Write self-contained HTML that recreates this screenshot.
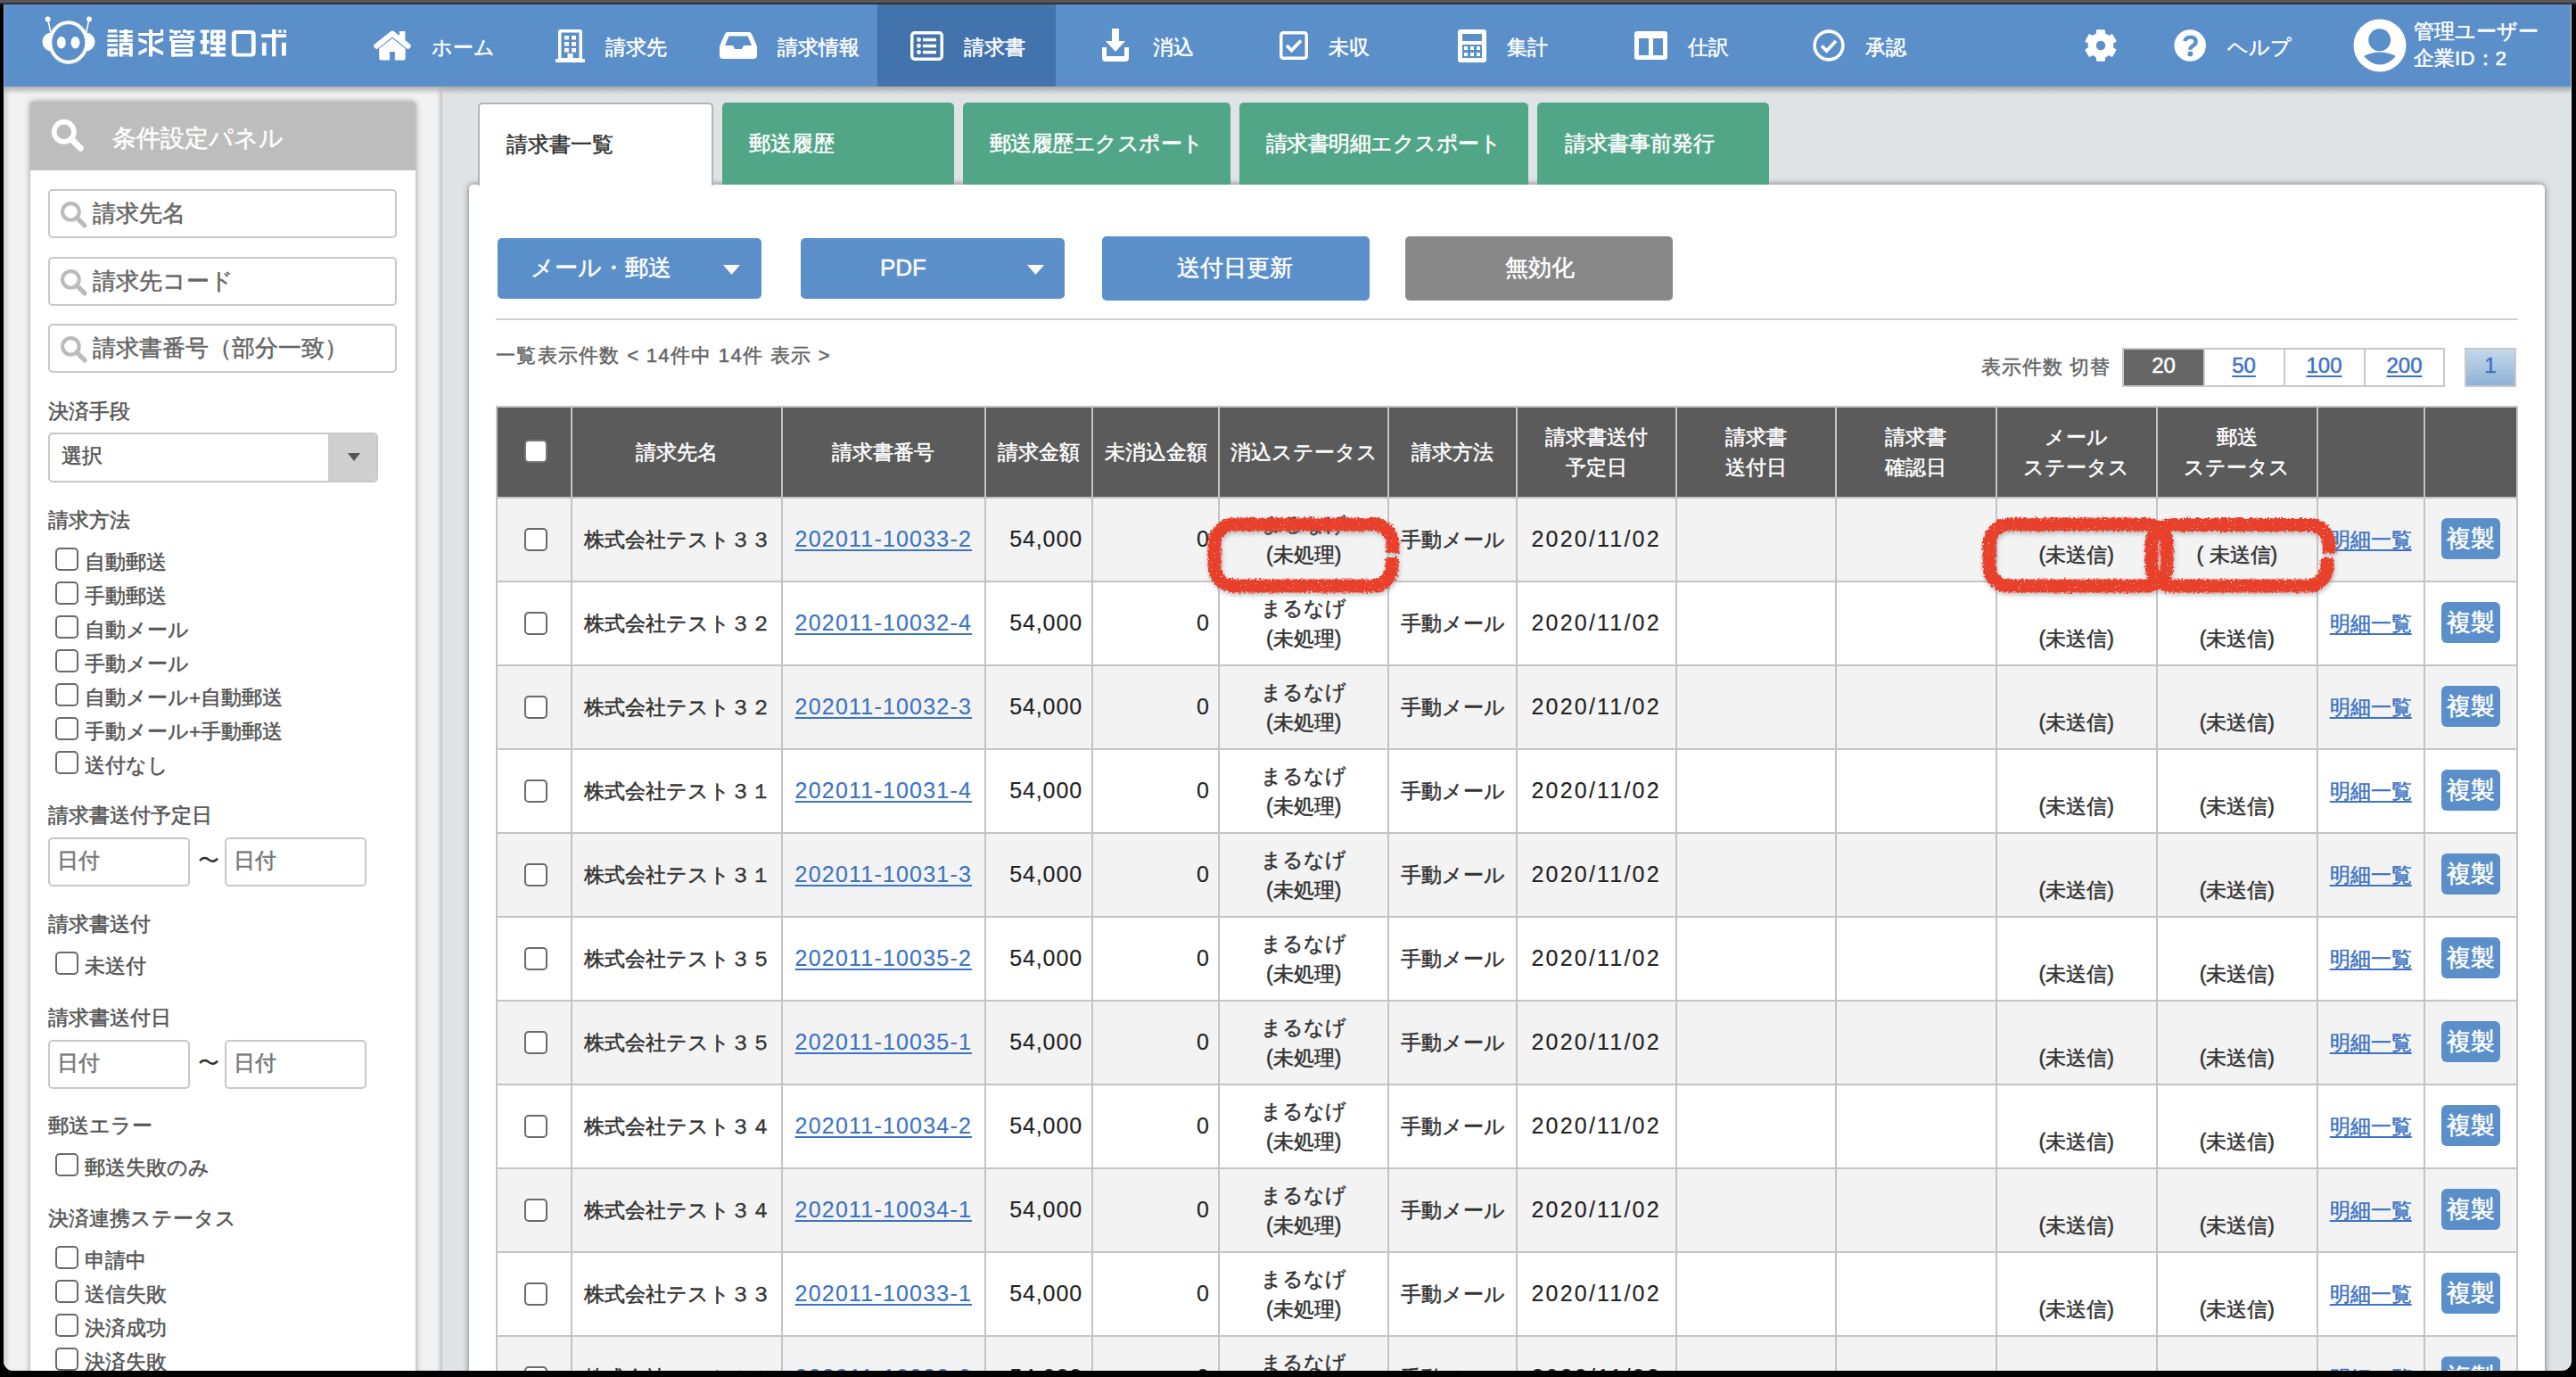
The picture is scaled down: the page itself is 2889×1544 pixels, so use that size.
<!DOCTYPE html>
<html lang="ja"><head><meta charset="utf-8">
<style>
*{box-sizing:border-box;margin:0;padding:0}
html,body{width:2889px;height:1544px;overflow:hidden;background:#000}
body{position:relative;font-family:"Liberation Sans",sans-serif;color:#333;-webkit-text-stroke:0.5px currentColor}
.a{position:absolute;white-space:nowrap}
#topbar{position:absolute;left:0;top:0;width:2889px;height:3px;background:#575757}
#topbar2{position:absolute;left:0;top:3px;width:2889px;height:2px;background:#35302f}
#win{position:absolute;left:0;top:0;width:2889px;height:1544px;clip-path:inset(5px 5px 7px 4px round 0 0 11px 11px);background:#dfe3e6}
#hdr{position:absolute;left:4px;top:5px;width:2880px;height:92px;background:#5b8fc9}
#hdrsh{position:absolute;left:495px;top:97px;width:2389px;height:9px;background:linear-gradient(#a9a9a9,rgba(223,227,230,0))}
#act{position:absolute;left:984px;top:5px;width:200px;height:92px;background:#4273ac}
.nt{color:#fff;font-size:23px;line-height:23px;margin-top:1.5px}
#side{position:absolute;left:4px;top:97px;width:492px;height:1440px;background:#f2f2f2;box-shadow:inset 5px 0 5px -2px rgba(0,0,0,.16),inset -5px 0 5px -3px rgba(0,0,0,.25)}
#sidesh{position:absolute;left:4px;top:97px;width:491px;height:9px;background:linear-gradient(#b0b0b0,rgba(242,242,242,0))}
#panel{position:absolute;left:34px;top:114px;width:432px;height:1500px;background:#fff;border-radius:3px 3px 0 0;box-shadow:0 0 7px rgba(0,0,0,.38)}
#phead{position:absolute;left:34px;top:114px;width:432px;height:77px;background:#bdbdbd;border-radius:3px 3px 0 0}
.lbl{color:#555;font-size:23px;line-height:23px}
.inp{position:absolute;border:2px solid #c8c8c8;border-radius:5px;background:#fff}
.ph{color:#666;font-size:26px;line-height:26px}
.cb{position:absolute;width:26px;height:26px;border:2.5px solid #6a6a6a;border-radius:5px;background:#fff}
.cbl{color:#555;font-size:22.6px;line-height:22px}

.tab{position:absolute;top:115px;height:92px;background:#52a688;border-radius:5px 5px 0 0}
.tt{color:#fff;font-size:24px;line-height:24px}
#cpanel{position:absolute;left:526px;top:207px;width:2328px;height:1400px;background:#fff;border-radius:5px;box-shadow:0 0 7px rgba(0,0,0,.5)}
.btn{position:absolute;background:#5b8fca;border-radius:5px}
.bt{color:#fff;font-size:26px;line-height:26px}
.caret{position:absolute}

.ht{color:#fff;font-size:23px;line-height:34px;text-align:center}
.td{color:#333;font-size:23px;line-height:23px}
.num{font-size:25px;line-height:25px;color:#222;-webkit-text-stroke:0.15px currentColor}
.lnk{color:#3d73c4;text-decoration:underline;text-decoration-thickness:2px;text-underline-offset:3px}
.cp{position:absolute;width:66px;height:46px;background:#5b8fca;border-radius:6px;color:#fff;font-size:27px;line-height:46px;text-align:center}
</style></head><body>
<div id="topbar"></div><div id="topbar2"></div>
<div id="win">
<div id="hdr"></div>
<div id="act"></div>
<div id="hdrsh"></div>
<!-- logo -->
<svg class="a" style="left:44px;top:15px" width="66" height="60" viewBox="44 15 66 60">
 <g fill="#fff">
  <circle cx="53.6" cy="21.4" r="3"/><circle cx="100" cy="21.4" r="3"/>
 </g>
 <g stroke="#fff" stroke-width="1.6" fill="none">
  <line x1="53.8" y1="22" x2="57" y2="37"/><line x1="99.8" y1="22" x2="96.6" y2="37"/>
 </g>
 <path fill="#fff" d="M58,36.5 A10.5,10.5 0 0 0 58,57.5 Z M96,36.5 A10.5,10.5 0 0 1 96,57.5 Z"/>
 <ellipse cx="76.8" cy="47.5" rx="20.5" ry="22.2" fill="none" stroke="#fff" stroke-width="4"/>
 <ellipse cx="68.8" cy="47.8" rx="5" ry="6.8" fill="#fff"/>
 <ellipse cx="84.5" cy="47.8" rx="5" ry="6.8" fill="#fff"/>
</svg>
<svg class="a" id="logot" style="left:115px;top:28px" width="215" height="40" viewBox="115 28 215 40"><path fill="#fff" d="M121.0,33.1H131.3V36.4H121.0ZM120.4,38.7H131.9V41.8H120.4ZM120.4,44.0H131.9V47.0H120.4ZM120.4,49.2H131.9V52.1H120.4ZM133.8,34.1H148.8V36.9H133.8ZM138.9,32.9H143.1V47.4H138.9ZM133.8,39.0H148.8V42.0H133.8ZM133.8,43.7H148.8V46.7H133.8ZM155.0,36.9H183.1V40.1H155.0ZM167.0,33.0H171.0V63.6H167.0ZM180.0,33.0H183.1V37.1H180.0ZM155.4,42.1 L164.7,46.0 L164.7,50.1 L155.4,46.3ZM183.1,42.1 L173.7,46.0 L173.7,50.1 L183.1,46.1ZM164.7,53.2 L155.4,58.0 L155.4,62.1 L164.7,57.4ZM171.0,51.7 L183.1,58.0 L183.1,62.1 L171.0,56.5ZM190.3,33.0H193.6V34.6H190.3ZM190.3,34.3H202.9V36.7H190.3ZM194.9,36.6H198.9V39.1H194.9ZM205.3,33.0H208.5V34.6H205.3ZM204.8,34.3H218.0V36.7H204.8ZM209.7,36.6H213.7V39.1H209.7ZM202.0,38.2H205.9V40.0H202.0ZM190.2,39.9H218.0V43.0H190.2ZM190.2,42.9H193.8V46.0H190.2ZM214.2,42.9H218.0V46.0H214.2ZM192.1,44.9H196.1V63.6H192.1ZM224.7,33.4H234.6V36.8H224.7ZM227.4,33.4H231.9V60.7H227.4ZM224.7,45.1H234.6V49.0H224.7ZM224.7,57.2H234.6V60.7H224.7ZM242.3,50.3H246.4V59.9H242.3ZM236.1,53.0H252.9V56.5H236.1ZM236.1,59.8H252.9V63.6H236.1ZM293.1,38.2H321.0V42.1H293.1ZM305.0,33.0H309.4V63.3H305.0ZM293.9,47.7H298.6V62.6H293.9ZM316.0,47.7H320.8V62.6H316.0ZM312.2,33.5H315.7V36.8H312.2ZM317.8,33.5H321.0V36.8H317.8Z"/><path fill="#fff" fill-rule="evenodd" d="M121.8,54.3H130.4Q131.9,54.3 131.9,55.8V62.1Q131.9,63.6 130.4,63.6H121.8Q120.3,63.6 120.3,62.1V55.8Q120.3,54.3 121.8,54.3ZM123.8,57.4H128.2V60.2H123.8Z"/><path fill="#fff" fill-rule="evenodd" d="M135.0,48.1H147.6Q148.8,48.1 148.8,49.3V62.4Q148.8,63.6 147.6,63.6H135.0Q133.8,63.6 133.8,62.4V49.3Q133.8,48.1 135.0,48.1ZM137.6,50.9H144.9V53.5H137.6ZM137.6,56.2H144.9V58.5H137.6Z"/><path fill="#fff" fill-rule="evenodd" d="M192.1,44.9H215.9V52.9H192.1ZM196.1,48.0H212.7V49.9H196.1Z"/><path fill="#fff" fill-rule="evenodd" d="M193.3,55.0H214.7Q215.9,55.0 215.9,56.2V62.4Q215.9,63.6 214.7,63.6H193.3Q192.1,63.6 192.1,62.4V56.2Q192.1,55.0 193.3,55.0ZM196.1,58.1H212.7V60.1H196.1Z"/><path fill="#fff" fill-rule="evenodd" d="M237.3,33.5H251.7Q252.9,33.5 252.9,34.7V49.2Q252.9,50.4 251.7,50.4H237.3Q236.1,50.4 236.1,49.2V34.7Q236.1,33.5 237.3,33.5ZM239.6,36.8H242.6V39.8H239.6ZM246.4,36.8H249.7V39.8H246.4ZM239.6,43.6H242.6V46.6H239.6ZM246.4,43.6H249.7V46.6H246.4Z"/><path fill="#fff" fill-rule="evenodd" d="M264.9,33.9H281.7Q286.7,33.9 286.7,38.9V58.6Q286.7,63.6 281.7,63.6H264.9Q259.9,63.6 259.9,58.6V38.9Q259.9,33.9 264.9,33.9ZM265.8,38.0H280.9Q281.9,38.0 281.9,39.0V58.8Q281.9,59.8 280.9,59.8H265.8Q264.8,59.8 264.8,58.8V39.0Q264.8,38.0 265.8,38.0Z"/><path fill="#5b8fc9" d="M137.6,61.3H144.9V63.8H137.6Z"/></svg>
<!-- nav icons -->
<svg class="a" style="left:419px;top:34px" width="42" height="34" viewBox="0 0 42 34"><rect x="29" y="1" width="6.4" height="12" rx="0.8" fill="#fff"/><polyline points="3.4,17.6 21,3.6 38.6,17.6" fill="none" stroke="#fff" stroke-width="6.2" stroke-linecap="round" stroke-linejoin="round"/><path fill="#fff" d="M21,8.9 L35.6,20.6 V31.5 Q35.6,33.5 33.6,33.5 H23.9 V23.9 H18.1 V33.5 H8.2 Q6.2,33.5 6.2,31.5 V20.6 Z"/></svg>
<div class="a nt" style="left:484px;top:40px">ホーム</div>
<svg class="a" style="left:623px;top:33px" width="33" height="37" viewBox="0 0 33 37">
 <rect x="0" y="33" width="33" height="4" rx="1" fill="#fff"/>
 <rect x="4.75" y="1.75" width="23.5" height="32" rx="1" fill="none" stroke="#fff" stroke-width="3.5"/>
 <g fill="#fff"><rect x="10" y="7" width="5" height="4.5"/><rect x="18" y="7" width="5" height="4.5"/><rect x="10" y="14" width="5" height="4.5"/><rect x="18" y="14" width="5" height="4.5"/><rect x="10" y="21" width="5" height="4.5"/><rect x="18" y="21" width="5" height="4.5"/><rect x="13.5" y="27" width="6" height="7"/></g>
</svg>
<div class="a nt" style="left:679px;top:40px">請求先</div>
<svg class="a" style="left:807px;top:36px" width="42" height="30" viewBox="0 0 42 30">
 <path fill="#fff" d="M9,0 H33 Q35,0 36,2 L42,16 V26 Q42,30 38,30 H4 Q0,30 0,26 V16 L6,2 Q7,0 9,0 Z"/>
 <path fill="#5b8fc9" d="M10.5,4.5 H31.5 L36,15 H27 L25,19 H17 L15,15 H6 Z"/>
</svg>
<div class="a nt" style="left:872px;top:40px">請求情報</div>
<svg class="a" style="left:1021px;top:35px" width="37" height="33" viewBox="0 0 37 33">
 <rect x="1.75" y="1.75" width="33.5" height="29.5" rx="3" fill="none" stroke="#fff" stroke-width="3.5"/>
 <g fill="#fff"><circle cx="9.5" cy="9.5" r="2.4"/><circle cx="9.5" cy="16.5" r="2.4"/><circle cx="9.5" cy="23.5" r="2.4"/>
 <rect x="14" y="7.8" width="15" height="3.5"/><rect x="14" y="14.8" width="15" height="3.5"/><rect x="14" y="21.8" width="15" height="3.5"/></g>
</svg>
<div class="a nt" style="left:1081px;top:40px">請求書</div>
<svg class="a" style="left:1236px;top:32px" width="30" height="37" viewBox="0 0 30 37">
 <path fill="#fff" d="M11,0 H19 V14 H26 L15,26 L4,14 H11 Z"/>
 <path fill="#fff" d="M0,21 H5 V31 H25 V21 H30 V33 Q30,37 26,37 H4 Q0,37 0,33 Z"/>
</svg>
<div class="a nt" style="left:1293px;top:40px">消込</div>
<svg class="a" style="left:1435px;top:35px" width="32" height="32" viewBox="0 0 32 32">
 <rect x="1.75" y="1.75" width="28.5" height="28.5" rx="2.5" fill="none" stroke="#fff" stroke-width="3.5"/>
 <polyline points="8,16 13.5,21.5 24,10.5" fill="none" stroke="#fff" stroke-width="3.8"/>
</svg>
<div class="a nt" style="left:1490px;top:40px">未収</div>
<svg class="a" style="left:1635px;top:33px" width="32" height="37" viewBox="0 0 32 37">
 <rect x="0" y="0" width="32" height="37" rx="3" fill="#fff"/>
 <rect x="5" y="5" width="22" height="8" fill="#5b8fc9"/>
 <rect x="5" y="17" width="22" height="15" fill="#5b8fc9"/>
 <g fill="#fff"><rect x="7" y="19" width="4" height="4"/><rect x="14" y="19" width="4" height="4"/><rect x="21" y="19" width="4" height="4"/><rect x="7" y="26" width="4" height="4"/><rect x="14" y="26" width="4" height="4"/><rect x="21" y="26" width="4" height="4"/></g>
</svg>
<div class="a nt" style="left:1690px;top:40px">集計</div>
<svg class="a" style="left:1833px;top:35px" width="37" height="32" viewBox="0 0 37 32">
 <rect x="0" y="0" width="37" height="32" rx="3" fill="#fff"/>
 <rect x="5" y="8" width="11" height="19" fill="#5b8fc9"/><rect x="21" y="8" width="11" height="19" fill="#5b8fc9"/>
</svg>
<div class="a nt" style="left:1893px;top:40px">仕訳</div>
<svg class="a" style="left:2033px;top:33px" width="36" height="36" viewBox="0 0 36 36">
 <circle cx="18" cy="18" r="15.9" fill="none" stroke="#fff" stroke-width="3.6"/>
 <polyline points="10,18.5 15.5,24 26,13" fill="none" stroke="#fff" stroke-width="3.8"/>
</svg>
<div class="a nt" style="left:2092px;top:40px">承認</div>
<svg class="a" style="left:2337px;top:32px" width="38" height="38" viewBox="0 0 38 38"><g fill="#fff" transform="translate(19,19)"><circle r="14.3"/><rect x="-5" y="-17.8" width="10" height="8" rx="1.2" transform="rotate(0)"/><rect x="-5" y="-17.8" width="10" height="8" rx="1.2" transform="rotate(60)"/><rect x="-5" y="-17.8" width="10" height="8" rx="1.2" transform="rotate(120)"/><rect x="-5" y="-17.8" width="10" height="8" rx="1.2" transform="rotate(180)"/><rect x="-5" y="-17.8" width="10" height="8" rx="1.2" transform="rotate(240)"/><rect x="-5" y="-17.8" width="10" height="8" rx="1.2" transform="rotate(300)"/></g><circle cx="19" cy="19" r="5.2" fill="#5b8fc9"/></svg>
<svg class="a" style="left:2438px;top:33px" width="36" height="36" viewBox="0 0 36 36"><circle cx="18.2" cy="18" r="17.8" fill="#fff"/><path d="M12.2,13.2 Q13.5,8.6 18.6,8.6 Q24.6,8.6 24.6,13.6 Q24.6,16.6 21,18.6 Q18.4,20 18.4,22.8" fill="none" stroke="#5b8fc9" stroke-width="4.4"/><circle cx="18.4" cy="27.4" r="2.9" fill="#5b8fc9"/></svg>
<div class="a nt" style="left:2498px;top:40px">ヘルプ</div>
<svg class="a" style="left:2639px;top:21px" width="60" height="60" viewBox="0 0 60 60">
 <circle cx="30" cy="30" r="29.5" fill="#fff"/>
 <circle cx="29.7" cy="23.8" r="12.5" fill="#5b8fc9"/>
 <path d="M12,42 Q20,37.5 30,37.5 Q40,37.5 48,42 Q40,51.5 30,51.5 Q20,51.5 12,42Z" fill="#5b8fc9"/>
</svg>
<div class="a" style="left:2707px;top:20.5px;color:#fff;font-size:22.6px;line-height:30.5px">管理ユーザー<br>企業ID：2</div>
<div id="side"></div>
<div id="sidesh"></div>
<div id="panel"></div>
<div id="phead"></div>
<!-- main -->
<div id="cpanel"></div>
<div class="a" style="left:536px;top:115px;width:264px;height:93px;background:#fff;border:2px solid #b5b5b5;border-bottom:none;border-radius:5px 5px 0 0"></div>
<div class="a" style="left:538px;top:204px;width:260px;height:6px;background:#fff"></div>
<div class="a" style="left:568px;top:150px;color:#333;font-size:24px;line-height:24px">請求書一覧</div>
<div class="tab" style="left:810px;width:260px"></div>
<div class="a tt" style="left:840px;top:149px">郵送履歴</div>
<div class="tab" style="left:1080px;width:300px"></div>
<div class="a tt" style="left:1110px;top:149px;letter-spacing:-0.55px">郵送履歴エクスポート</div>
<div class="tab" style="left:1390px;width:324px"></div>
<div class="a tt" style="left:1420px;top:149px;letter-spacing:-0.55px">請求書明細エクスポート</div>
<div class="tab" style="left:1724px;width:260px"></div>
<div class="a tt" style="left:1755px;top:149px">請求書事前発行</div>
<div class="btn" style="left:557.5px;top:267px;width:296.5px;height:68px;background:#5b8fca"></div>
<div class="a bt" style="left:595px;top:287.0px">メール・郵送</div>
<svg class="a" style="left:811px;top:297px" width="19" height="11" viewBox="0 0 19 11"><path d="M0,0 H19 L9.5,11 Z" fill="#fff"/></svg>
<div class="btn" style="left:898px;top:267px;width:296px;height:68px;background:#5b8fca"></div>
<div class="a bt" style="left:987px;top:287.0px">PDF</div>
<svg class="a" style="left:1151.5px;top:297px" width="19" height="11" viewBox="0 0 19 11"><path d="M0,0 H19 L9.5,11 Z" fill="#fff"/></svg>
<div class="btn" style="left:1236px;top:265px;width:300px;height:72px;background:#5b8fca"></div>
<div class="a bt" style="left:1320px;top:287.0px">送付日更新</div>
<div class="btn" style="left:1576px;top:265px;width:300px;height:72px;background:#888"></div>
<div class="a bt" style="left:1688px;top:287.0px">無効化</div>
<div class="a" style="left:556px;top:357px;width:2268px;height:2px;background:#cfcfcf"></div>
<div class="a" style="left:556px;top:388px;color:#666;font-size:22px;line-height:22px;letter-spacing:1.3px">一覧表示件数 &lt; 14件中 14件 表示 &gt;</div>
<div class="a" style="left:2222px;top:401px;color:#666;font-size:22px;line-height:22px;letter-spacing:1px">表示件数 切替</div>
<div class="a" style="left:2380px;top:389.5px;width:362px;height:44px;border:2px solid #c8c8c8;background:#fff"></div>
<div class="a" style="left:2382px;top:391.5px;width:89px;height:40px;background:#666"></div>
<div class="a" style="left:2471px;top:391.5px;width:2px;height:40px;background:#c8c8c8"></div>
<div class="a" style="left:2561px;top:391.5px;width:2px;height:40px;background:#c8c8c8"></div>
<div class="a" style="left:2651px;top:391.5px;width:2px;height:40px;background:#c8c8c8"></div>
<div class="a" style="left:2381.5px;width:90px;text-align:center;top:398px;color:#fff;font-size:24px;line-height:24px;">20</div>
<div class="a" style="left:2471.5px;width:90px;text-align:center;top:398px;color:#3d73c4;font-size:24px;line-height:24px;text-decoration:underline;text-underline-offset:3px;">50</div>
<div class="a" style="left:2561.5px;width:90px;text-align:center;top:398px;color:#3d73c4;font-size:24px;line-height:24px;text-decoration:underline;text-underline-offset:3px;">100</div>
<div class="a" style="left:2651.5px;width:90px;text-align:center;top:398px;color:#3d73c4;font-size:24px;line-height:24px;text-decoration:underline;text-underline-offset:3px;">200</div>
<div class="a" style="left:2764px;top:389.5px;width:58px;height:44px;border:2px solid #c8c8c8;background:linear-gradient(#c3d8ec,#8fb2d8)"></div>
<div class="a" style="left:2764px;width:58px;text-align:center;top:398px;color:#3d73c4;font-size:24px;line-height:24px">1</div>
<!-- table -->
<div class="a" style="left:556px;top:455px;width:2268px;height:103px;background:#5b5b5b"></div>
<div class="a" style="left:556px;top:559px;width:2268px;height:92px;background:#f3f3f3"></div>
<div class="a" style="left:556px;top:653px;width:2268px;height:92px;background:#fff"></div>
<div class="a" style="left:556px;top:747px;width:2268px;height:92px;background:#f3f3f3"></div>
<div class="a" style="left:556px;top:841px;width:2268px;height:92px;background:#fff"></div>
<div class="a" style="left:556px;top:935px;width:2268px;height:92px;background:#f3f3f3"></div>
<div class="a" style="left:556px;top:1029px;width:2268px;height:92px;background:#fff"></div>
<div class="a" style="left:556px;top:1123px;width:2268px;height:92px;background:#f3f3f3"></div>
<div class="a" style="left:556px;top:1217px;width:2268px;height:92px;background:#fff"></div>
<div class="a" style="left:556px;top:1311px;width:2268px;height:92px;background:#f3f3f3"></div>
<div class="a" style="left:556px;top:1405px;width:2268px;height:92px;background:#fff"></div>
<div class="a" style="left:556px;top:1499px;width:2268px;height:92px;background:#f3f3f3"></div>
<div class="a" style="left:556px;top:455px;width:2268px;height:2px;background:#c4c4c4"></div>
<div class="a" style="left:556px;top:557px;width:2268px;height:2px;background:#c4c4c4"></div>
<div class="a" style="left:556px;top:651px;width:2268px;height:2px;background:#c4c4c4"></div>
<div class="a" style="left:556px;top:745px;width:2268px;height:2px;background:#c4c4c4"></div>
<div class="a" style="left:556px;top:839px;width:2268px;height:2px;background:#c4c4c4"></div>
<div class="a" style="left:556px;top:933px;width:2268px;height:2px;background:#c4c4c4"></div>
<div class="a" style="left:556px;top:1027px;width:2268px;height:2px;background:#c4c4c4"></div>
<div class="a" style="left:556px;top:1121px;width:2268px;height:2px;background:#c4c4c4"></div>
<div class="a" style="left:556px;top:1215px;width:2268px;height:2px;background:#c4c4c4"></div>
<div class="a" style="left:556px;top:1309px;width:2268px;height:2px;background:#c4c4c4"></div>
<div class="a" style="left:556px;top:1403px;width:2268px;height:2px;background:#c4c4c4"></div>
<div class="a" style="left:556px;top:1497px;width:2268px;height:2px;background:#c4c4c4"></div>
<div class="a" style="left:555.6px;top:455px;width:2px;height:1100px;background:#c4c4c4"></div>
<div class="a" style="left:639.8px;top:455px;width:2px;height:1100px;background:#c4c4c4"></div>
<div class="a" style="left:875.7px;top:455px;width:2px;height:1100px;background:#c4c4c4"></div>
<div class="a" style="left:1104.0px;top:455px;width:2px;height:1100px;background:#c4c4c4"></div>
<div class="a" style="left:1224.0px;top:455px;width:2px;height:1100px;background:#c4c4c4"></div>
<div class="a" style="left:1366.0px;top:455px;width:2px;height:1100px;background:#c4c4c4"></div>
<div class="a" style="left:1556.4px;top:455px;width:2px;height:1100px;background:#c4c4c4"></div>
<div class="a" style="left:1699.7px;top:455px;width:2px;height:1100px;background:#c4c4c4"></div>
<div class="a" style="left:1878.6px;top:455px;width:2px;height:1100px;background:#c4c4c4"></div>
<div class="a" style="left:2057.8px;top:455px;width:2px;height:1100px;background:#c4c4c4"></div>
<div class="a" style="left:2237.7px;top:455px;width:2px;height:1100px;background:#c4c4c4"></div>
<div class="a" style="left:2417.8px;top:455px;width:2px;height:1100px;background:#c4c4c4"></div>
<div class="a" style="left:2597.9px;top:455px;width:2px;height:1100px;background:#c4c4c4"></div>
<div class="a" style="left:2717.6px;top:455px;width:2px;height:1100px;background:#c4c4c4"></div>
<div class="a" style="left:2822.0px;top:455px;width:2px;height:1100px;background:#c4c4c4"></div>
<div class="cb" style="left:588px;top:493px;border-color:#777"></div>
<div class="a ht" style="left:640.8px;width:235.9px;top:490.0px">請求先名</div>
<div class="a ht" style="left:876.7px;width:228.3px;top:490.0px">請求書番号</div>
<div class="a ht" style="left:1105.0px;width:120.0px;top:490.0px">請求金額</div>
<div class="a ht" style="left:1225.0px;width:142.0px;top:490.0px">未消込金額</div>
<div class="a ht" style="left:1367.0px;width:190.4px;top:490.0px">消込ステータス</div>
<div class="a ht" style="left:1557.4px;width:143.3px;top:490.0px">請求方法</div>
<div class="a ht" style="left:1700.7px;width:178.9px;top:473.0px">請求書送付<br>予定日</div>
<div class="a ht" style="left:1879.6px;width:179.2px;top:473.0px">請求書<br>送付日</div>
<div class="a ht" style="left:2058.8px;width:179.9px;top:473.0px">請求書<br>確認日</div>
<div class="a ht" style="left:2238.7px;width:180.1px;top:473.0px">メール<br>ステータス</div>
<div class="a ht" style="left:2418.8px;width:180.1px;top:473.0px">郵送<br>ステータス</div>
<div class="cb" style="left:588px;top:592px"></div>
<div class="a td" style="left:655px;top:593.5px">株式会社テスト３３</div>
<div class="a td num lnk" style="left:876.7px;width:228.3px;text-align:center;top:591.5px;letter-spacing:1.2px">202011-10033-2</div>
<div class="a td num" style="left:1105.0px;width:109.0px;text-align:right;top:591.5px;letter-spacing:0.9px">54,000</div>
<div class="a td num" style="left:1225.0px;width:131.0px;text-align:right;top:591.5px">0</div>
<div class="a td" style="left:1367.0px;width:190.4px;text-align:center;top:571px;line-height:34px">まるなげ<br>(未処理)</div>
<div class="a td" style="left:1557.4px;width:143.3px;text-align:center;top:593.5px">手動メール</div>
<div class="a td num" style="left:1700.7px;width:178.9px;text-align:center;top:591.5px;letter-spacing:2.2px">2020/11/02</div>
<div class="a td" style="left:2238.7px;width:180.1px;text-align:center;top:605px;line-height:34px">(未送信)</div>
<div class="a td" style="left:2418.8px;width:180.1px;text-align:center;top:605px;line-height:34px">( 未送信)</div>
<div class="a td lnk" style="left:2598.9px;width:119.7px;text-align:center;top:593.5px;font-size:23px">明細一覧</div>
<div class="cp" style="left:2738px;top:581px">複製</div>
<div class="cb" style="left:588px;top:686px"></div>
<div class="a td" style="left:655px;top:687.5px">株式会社テスト３２</div>
<div class="a td num lnk" style="left:876.7px;width:228.3px;text-align:center;top:685.5px;letter-spacing:1.2px">202011-10032-4</div>
<div class="a td num" style="left:1105.0px;width:109.0px;text-align:right;top:685.5px;letter-spacing:0.9px">54,000</div>
<div class="a td num" style="left:1225.0px;width:131.0px;text-align:right;top:685.5px">0</div>
<div class="a td" style="left:1367.0px;width:190.4px;text-align:center;top:665px;line-height:34px">まるなげ<br>(未処理)</div>
<div class="a td" style="left:1557.4px;width:143.3px;text-align:center;top:687.5px">手動メール</div>
<div class="a td num" style="left:1700.7px;width:178.9px;text-align:center;top:685.5px;letter-spacing:2.2px">2020/11/02</div>
<div class="a td" style="left:2238.7px;width:180.1px;text-align:center;top:699px;line-height:34px">(未送信)</div>
<div class="a td" style="left:2418.8px;width:180.1px;text-align:center;top:699px;line-height:34px">(未送信)</div>
<div class="a td lnk" style="left:2598.9px;width:119.7px;text-align:center;top:687.5px;font-size:23px">明細一覧</div>
<div class="cp" style="left:2738px;top:675px">複製</div>
<div class="cb" style="left:588px;top:780px"></div>
<div class="a td" style="left:655px;top:781.5px">株式会社テスト３２</div>
<div class="a td num lnk" style="left:876.7px;width:228.3px;text-align:center;top:779.5px;letter-spacing:1.2px">202011-10032-3</div>
<div class="a td num" style="left:1105.0px;width:109.0px;text-align:right;top:779.5px;letter-spacing:0.9px">54,000</div>
<div class="a td num" style="left:1225.0px;width:131.0px;text-align:right;top:779.5px">0</div>
<div class="a td" style="left:1367.0px;width:190.4px;text-align:center;top:759px;line-height:34px">まるなげ<br>(未処理)</div>
<div class="a td" style="left:1557.4px;width:143.3px;text-align:center;top:781.5px">手動メール</div>
<div class="a td num" style="left:1700.7px;width:178.9px;text-align:center;top:779.5px;letter-spacing:2.2px">2020/11/02</div>
<div class="a td" style="left:2238.7px;width:180.1px;text-align:center;top:793px;line-height:34px">(未送信)</div>
<div class="a td" style="left:2418.8px;width:180.1px;text-align:center;top:793px;line-height:34px">(未送信)</div>
<div class="a td lnk" style="left:2598.9px;width:119.7px;text-align:center;top:781.5px;font-size:23px">明細一覧</div>
<div class="cp" style="left:2738px;top:769px">複製</div>
<div class="cb" style="left:588px;top:874px"></div>
<div class="a td" style="left:655px;top:875.5px">株式会社テスト３１</div>
<div class="a td num lnk" style="left:876.7px;width:228.3px;text-align:center;top:873.5px;letter-spacing:1.2px">202011-10031-4</div>
<div class="a td num" style="left:1105.0px;width:109.0px;text-align:right;top:873.5px;letter-spacing:0.9px">54,000</div>
<div class="a td num" style="left:1225.0px;width:131.0px;text-align:right;top:873.5px">0</div>
<div class="a td" style="left:1367.0px;width:190.4px;text-align:center;top:853px;line-height:34px">まるなげ<br>(未処理)</div>
<div class="a td" style="left:1557.4px;width:143.3px;text-align:center;top:875.5px">手動メール</div>
<div class="a td num" style="left:1700.7px;width:178.9px;text-align:center;top:873.5px;letter-spacing:2.2px">2020/11/02</div>
<div class="a td" style="left:2238.7px;width:180.1px;text-align:center;top:887px;line-height:34px">(未送信)</div>
<div class="a td" style="left:2418.8px;width:180.1px;text-align:center;top:887px;line-height:34px">(未送信)</div>
<div class="a td lnk" style="left:2598.9px;width:119.7px;text-align:center;top:875.5px;font-size:23px">明細一覧</div>
<div class="cp" style="left:2738px;top:863px">複製</div>
<div class="cb" style="left:588px;top:968px"></div>
<div class="a td" style="left:655px;top:969.5px">株式会社テスト３１</div>
<div class="a td num lnk" style="left:876.7px;width:228.3px;text-align:center;top:967.5px;letter-spacing:1.2px">202011-10031-3</div>
<div class="a td num" style="left:1105.0px;width:109.0px;text-align:right;top:967.5px;letter-spacing:0.9px">54,000</div>
<div class="a td num" style="left:1225.0px;width:131.0px;text-align:right;top:967.5px">0</div>
<div class="a td" style="left:1367.0px;width:190.4px;text-align:center;top:947px;line-height:34px">まるなげ<br>(未処理)</div>
<div class="a td" style="left:1557.4px;width:143.3px;text-align:center;top:969.5px">手動メール</div>
<div class="a td num" style="left:1700.7px;width:178.9px;text-align:center;top:967.5px;letter-spacing:2.2px">2020/11/02</div>
<div class="a td" style="left:2238.7px;width:180.1px;text-align:center;top:981px;line-height:34px">(未送信)</div>
<div class="a td" style="left:2418.8px;width:180.1px;text-align:center;top:981px;line-height:34px">(未送信)</div>
<div class="a td lnk" style="left:2598.9px;width:119.7px;text-align:center;top:969.5px;font-size:23px">明細一覧</div>
<div class="cp" style="left:2738px;top:957px">複製</div>
<div class="cb" style="left:588px;top:1062px"></div>
<div class="a td" style="left:655px;top:1063.5px">株式会社テスト３５</div>
<div class="a td num lnk" style="left:876.7px;width:228.3px;text-align:center;top:1061.5px;letter-spacing:1.2px">202011-10035-2</div>
<div class="a td num" style="left:1105.0px;width:109.0px;text-align:right;top:1061.5px;letter-spacing:0.9px">54,000</div>
<div class="a td num" style="left:1225.0px;width:131.0px;text-align:right;top:1061.5px">0</div>
<div class="a td" style="left:1367.0px;width:190.4px;text-align:center;top:1041px;line-height:34px">まるなげ<br>(未処理)</div>
<div class="a td" style="left:1557.4px;width:143.3px;text-align:center;top:1063.5px">手動メール</div>
<div class="a td num" style="left:1700.7px;width:178.9px;text-align:center;top:1061.5px;letter-spacing:2.2px">2020/11/02</div>
<div class="a td" style="left:2238.7px;width:180.1px;text-align:center;top:1075px;line-height:34px">(未送信)</div>
<div class="a td" style="left:2418.8px;width:180.1px;text-align:center;top:1075px;line-height:34px">(未送信)</div>
<div class="a td lnk" style="left:2598.9px;width:119.7px;text-align:center;top:1063.5px;font-size:23px">明細一覧</div>
<div class="cp" style="left:2738px;top:1051px">複製</div>
<div class="cb" style="left:588px;top:1156px"></div>
<div class="a td" style="left:655px;top:1157.5px">株式会社テスト３５</div>
<div class="a td num lnk" style="left:876.7px;width:228.3px;text-align:center;top:1155.5px;letter-spacing:1.2px">202011-10035-1</div>
<div class="a td num" style="left:1105.0px;width:109.0px;text-align:right;top:1155.5px;letter-spacing:0.9px">54,000</div>
<div class="a td num" style="left:1225.0px;width:131.0px;text-align:right;top:1155.5px">0</div>
<div class="a td" style="left:1367.0px;width:190.4px;text-align:center;top:1135px;line-height:34px">まるなげ<br>(未処理)</div>
<div class="a td" style="left:1557.4px;width:143.3px;text-align:center;top:1157.5px">手動メール</div>
<div class="a td num" style="left:1700.7px;width:178.9px;text-align:center;top:1155.5px;letter-spacing:2.2px">2020/11/02</div>
<div class="a td" style="left:2238.7px;width:180.1px;text-align:center;top:1169px;line-height:34px">(未送信)</div>
<div class="a td" style="left:2418.8px;width:180.1px;text-align:center;top:1169px;line-height:34px">(未送信)</div>
<div class="a td lnk" style="left:2598.9px;width:119.7px;text-align:center;top:1157.5px;font-size:23px">明細一覧</div>
<div class="cp" style="left:2738px;top:1145px">複製</div>
<div class="cb" style="left:588px;top:1250px"></div>
<div class="a td" style="left:655px;top:1251.5px">株式会社テスト３４</div>
<div class="a td num lnk" style="left:876.7px;width:228.3px;text-align:center;top:1249.5px;letter-spacing:1.2px">202011-10034-2</div>
<div class="a td num" style="left:1105.0px;width:109.0px;text-align:right;top:1249.5px;letter-spacing:0.9px">54,000</div>
<div class="a td num" style="left:1225.0px;width:131.0px;text-align:right;top:1249.5px">0</div>
<div class="a td" style="left:1367.0px;width:190.4px;text-align:center;top:1229px;line-height:34px">まるなげ<br>(未処理)</div>
<div class="a td" style="left:1557.4px;width:143.3px;text-align:center;top:1251.5px">手動メール</div>
<div class="a td num" style="left:1700.7px;width:178.9px;text-align:center;top:1249.5px;letter-spacing:2.2px">2020/11/02</div>
<div class="a td" style="left:2238.7px;width:180.1px;text-align:center;top:1263px;line-height:34px">(未送信)</div>
<div class="a td" style="left:2418.8px;width:180.1px;text-align:center;top:1263px;line-height:34px">(未送信)</div>
<div class="a td lnk" style="left:2598.9px;width:119.7px;text-align:center;top:1251.5px;font-size:23px">明細一覧</div>
<div class="cp" style="left:2738px;top:1239px">複製</div>
<div class="cb" style="left:588px;top:1344px"></div>
<div class="a td" style="left:655px;top:1345.5px">株式会社テスト３４</div>
<div class="a td num lnk" style="left:876.7px;width:228.3px;text-align:center;top:1343.5px;letter-spacing:1.2px">202011-10034-1</div>
<div class="a td num" style="left:1105.0px;width:109.0px;text-align:right;top:1343.5px;letter-spacing:0.9px">54,000</div>
<div class="a td num" style="left:1225.0px;width:131.0px;text-align:right;top:1343.5px">0</div>
<div class="a td" style="left:1367.0px;width:190.4px;text-align:center;top:1323px;line-height:34px">まるなげ<br>(未処理)</div>
<div class="a td" style="left:1557.4px;width:143.3px;text-align:center;top:1345.5px">手動メール</div>
<div class="a td num" style="left:1700.7px;width:178.9px;text-align:center;top:1343.5px;letter-spacing:2.2px">2020/11/02</div>
<div class="a td" style="left:2238.7px;width:180.1px;text-align:center;top:1357px;line-height:34px">(未送信)</div>
<div class="a td" style="left:2418.8px;width:180.1px;text-align:center;top:1357px;line-height:34px">(未送信)</div>
<div class="a td lnk" style="left:2598.9px;width:119.7px;text-align:center;top:1345.5px;font-size:23px">明細一覧</div>
<div class="cp" style="left:2738px;top:1333px">複製</div>
<div class="cb" style="left:588px;top:1438px"></div>
<div class="a td" style="left:655px;top:1439.5px">株式会社テスト３３</div>
<div class="a td num lnk" style="left:876.7px;width:228.3px;text-align:center;top:1437.5px;letter-spacing:1.2px">202011-10033-1</div>
<div class="a td num" style="left:1105.0px;width:109.0px;text-align:right;top:1437.5px;letter-spacing:0.9px">54,000</div>
<div class="a td num" style="left:1225.0px;width:131.0px;text-align:right;top:1437.5px">0</div>
<div class="a td" style="left:1367.0px;width:190.4px;text-align:center;top:1417px;line-height:34px">まるなげ<br>(未処理)</div>
<div class="a td" style="left:1557.4px;width:143.3px;text-align:center;top:1439.5px">手動メール</div>
<div class="a td num" style="left:1700.7px;width:178.9px;text-align:center;top:1437.5px;letter-spacing:2.2px">2020/11/02</div>
<div class="a td" style="left:2238.7px;width:180.1px;text-align:center;top:1451px;line-height:34px">(未送信)</div>
<div class="a td" style="left:2418.8px;width:180.1px;text-align:center;top:1451px;line-height:34px">(未送信)</div>
<div class="a td lnk" style="left:2598.9px;width:119.7px;text-align:center;top:1439.5px;font-size:23px">明細一覧</div>
<div class="cp" style="left:2738px;top:1427px">複製</div>
<div class="cb" style="left:588px;top:1532px"></div>
<div class="a td" style="left:655px;top:1533.5px">株式会社テスト３３</div>
<div class="a td num lnk" style="left:876.7px;width:228.3px;text-align:center;top:1531.5px;letter-spacing:1.2px">202011-10033-0</div>
<div class="a td num" style="left:1105.0px;width:109.0px;text-align:right;top:1531.5px;letter-spacing:0.9px">54,000</div>
<div class="a td num" style="left:1225.0px;width:131.0px;text-align:right;top:1531.5px">0</div>
<div class="a td" style="left:1367.0px;width:190.4px;text-align:center;top:1511px;line-height:34px">まるなげ<br>(未処理)</div>
<div class="a td" style="left:1557.4px;width:143.3px;text-align:center;top:1533.5px">手動メール</div>
<div class="a td num" style="left:1700.7px;width:178.9px;text-align:center;top:1531.5px;letter-spacing:2.2px">2020/11/02</div>
<div class="a td" style="left:2238.7px;width:180.1px;text-align:center;top:1545px;line-height:34px">(未送信)</div>
<div class="a td" style="left:2418.8px;width:180.1px;text-align:center;top:1545px;line-height:34px">(未送信)</div>
<div class="a td lnk" style="left:2598.9px;width:119.7px;text-align:center;top:1533.5px;font-size:23px">明細一覧</div>
<div class="cp" style="left:2738px;top:1521px">複製</div>
<!-- sidebar -->
<svg class="a" style="left:57px;top:133px" width="37" height="37" viewBox="0 0 30 30"><circle cx="12" cy="12" r="9" fill="none" stroke="#fff" stroke-width="4.6"/><line x1="18.5" y1="18.5" x2="27" y2="27" stroke="#fff" stroke-width="5.6" stroke-linecap="round"/></svg>
<div class="a" style="left:126px;top:141.5px;color:#fff;font-size:27px;line-height:27px">条件設定パネル</div>
<div class="inp" style="left:54px;top:211.5px;width:391px;height:55px"></div>
<svg class="a" style="left:67px;top:224.5px" width="31" height="31" viewBox="0 0 30 30"><circle cx="12" cy="12" r="9" fill="none" stroke="#bbb" stroke-width="4"/><line x1="18.5" y1="18.5" x2="27" y2="27" stroke="#bbb" stroke-width="5" stroke-linecap="round"/></svg>
<div class="a ph" style="left:104px;top:225.5px">請求先名</div>
<div class="inp" style="left:54px;top:287.5px;width:391px;height:55px"></div>
<svg class="a" style="left:67px;top:300.5px" width="31" height="31" viewBox="0 0 30 30"><circle cx="12" cy="12" r="9" fill="none" stroke="#bbb" stroke-width="4"/><line x1="18.5" y1="18.5" x2="27" y2="27" stroke="#bbb" stroke-width="5" stroke-linecap="round"/></svg>
<div class="a ph" style="left:104px;top:301.5px">請求先コード</div>
<div class="inp" style="left:54px;top:363px;width:391px;height:55px"></div>
<svg class="a" style="left:67px;top:376px" width="31" height="31" viewBox="0 0 30 30"><circle cx="12" cy="12" r="9" fill="none" stroke="#bbb" stroke-width="4"/><line x1="18.5" y1="18.5" x2="27" y2="27" stroke="#bbb" stroke-width="5" stroke-linecap="round"/></svg>
<div class="a ph" style="left:104px;top:377px">請求書番号（部分一致）</div>
<div class="a lbl" style="left:54px;top:450px">決済手段</div>
<div class="inp" style="left:54px;top:485px;width:370px;height:56px;overflow:hidden"><div style="position:absolute;right:0;top:0;width:54px;height:52px;background:#cfcfcf"></div></div>
<svg class="a" style="left:390px;top:508px" width="14" height="10" viewBox="0 0 14 10"><path d="M0,0 H14 L7,9 Z" fill="#555"/></svg>
<div class="a lbl" style="left:69px;top:500px;color:#555">選択</div>
<div class="a lbl" style="left:54px;top:572px">請求方法</div>
<div class="cb" style="left:62px;top:613.5px"></div>
<div class="a cbl" style="left:95px;top:619.5px">自動郵送</div>
<div class="cb" style="left:62px;top:651.5px"></div>
<div class="a cbl" style="left:95px;top:657.5px">手動郵送</div>
<div class="cb" style="left:62px;top:689.5px"></div>
<div class="a cbl" style="left:95px;top:695.5px">自動メール</div>
<div class="cb" style="left:62px;top:727.5px"></div>
<div class="a cbl" style="left:95px;top:733.5px">手動メール</div>
<div class="cb" style="left:62px;top:765.5px"></div>
<div class="a cbl" style="left:95px;top:771.5px">自動メール+自動郵送</div>
<div class="cb" style="left:62px;top:803.5px"></div>
<div class="a cbl" style="left:95px;top:809.5px">手動メール+手動郵送</div>
<div class="cb" style="left:62px;top:841.5px"></div>
<div class="a cbl" style="left:95px;top:847.5px">送付なし</div>
<div class="a lbl" style="left:54px;top:903px">請求書送付予定日</div>
<div class="inp" style="left:54px;top:939px;width:159px;height:55px"></div>
<div class="inp" style="left:252px;top:939px;width:159px;height:55px"></div>
<div class="a" style="left:64px;top:953px;color:#777;font-size:24px;line-height:24px">日付</div>
<div class="a" style="left:262px;top:953px;color:#777;font-size:24px;line-height:24px">日付</div>
<div class="a" style="left:222px;top:953px;color:#333;font-size:24px;line-height:24px;-webkit-text-stroke:0">〜</div>
<div class="inp" style="left:54px;top:1166px;width:159px;height:55px"></div>
<div class="inp" style="left:252px;top:1166px;width:159px;height:55px"></div>
<div class="a" style="left:64px;top:1180px;color:#777;font-size:24px;line-height:24px">日付</div>
<div class="a" style="left:262px;top:1180px;color:#777;font-size:24px;line-height:24px">日付</div>
<div class="a" style="left:222px;top:1180px;color:#333;font-size:24px;line-height:24px;-webkit-text-stroke:0">〜</div>
<div class="a lbl" style="left:54px;top:1025px">請求書送付</div>
<div class="cb" style="left:62px;top:1067px"></div><div class="a cbl" style="left:95px;top:1073px">未送付</div>
<div class="a lbl" style="left:54px;top:1130px">請求書送付日</div>
<div class="a lbl" style="left:54px;top:1251px">郵送エラー</div>
<div class="cb" style="left:62px;top:1293px"></div><div class="a cbl" style="left:95px;top:1299px">郵送失敗のみ</div>
<div class="a lbl" style="left:54px;top:1355px">決済連携ステータス</div>
<div class="cb" style="left:62px;top:1397px"></div>
<div class="a cbl" style="left:95px;top:1403px">申請中</div>
<div class="cb" style="left:62px;top:1435px"></div>
<div class="a cbl" style="left:95px;top:1441px">送信失敗</div>
<div class="cb" style="left:62px;top:1473px"></div>
<div class="a cbl" style="left:95px;top:1479px">決済成功</div>
<div class="cb" style="left:62px;top:1511px"></div>
<div class="a cbl" style="left:95px;top:1517px">決済失敗</div>
<svg class="a" style="left:0;top:0;pointer-events:none" width="2889" height="1544" viewBox="0 0 2889 1544"><defs><filter id="rough" x="-20%" y="-30%" width="140%" height="160%"><feTurbulence type="fractalNoise" baseFrequency="0.4" numOctaves="2" seed="7" result="n"/><feDisplacementMap in="SourceGraphic" in2="n" scale="6" xChannelSelector="R" yChannelSelector="G" result="d0"/><feTurbulence type="fractalNoise" baseFrequency="0.5" numOctaves="1" seed="3" result="n2"/><feColorMatrix in="n2" type="matrix" values="0 0 0 0 0  0 0 0 0 0  0 0 0 0 0  40 0 0 0 -29" result="holes"/><feComposite in="d0" in2="holes" operator="out" result="d"/><feGaussianBlur in="d0" stdDeviation="2.5" result="b"/><feOffset in="b" dx="1" dy="3" result="o"/><feColorMatrix in="o" type="matrix" values="0 0 0 0 0.2  0 0 0 0 0.2  0 0 0 0 0.2  0 0 0 0.45 0" result="sh"/><feMerge><feMergeNode in="sh"/><feMergeNode in="d"/></feMerge></filter></defs><g fill="none" stroke="#e8412a" stroke-width="15" stroke-linecap="butt" filter="url(#rough)"><path d="M1561,625.0 V635 A22,22 0 0 1 1540,657 H1384 A22,22 0 0 1 1362,635 V610 A22,22 0 0 1 1384,588 H1540 A22,22 0 0 1 1562,610 V620.0"/><path d="M2430,622.5 V635 A22,22 0 0 1 2408,657 H2253 A22,22 0 0 1 2231,635 V610 A22,22 0 0 1 2253,588 H2408 A22,22 0 0 1 2430,610 V622.5"/><path d="M2610,625.25 V635.0 A22,22 0 0 1 2590,657.0 H2435 A22,22 0 0 1 2413,635.0 V610.5 A22,22 0 0 1 2435,588.5 H2590 A22,22 0 0 1 2612,610.5 V620.25"/></g></svg>
<div class="a" style="left:4px;top:5px;width:2880px;height:1532px;border-radius:0 0 11px 11px;box-shadow:inset 1px 0 0 rgba(255,255,255,.3),inset -1px 0 0 rgba(255,255,255,.55);pointer-events:none"></div>
</div>
</body></html>
